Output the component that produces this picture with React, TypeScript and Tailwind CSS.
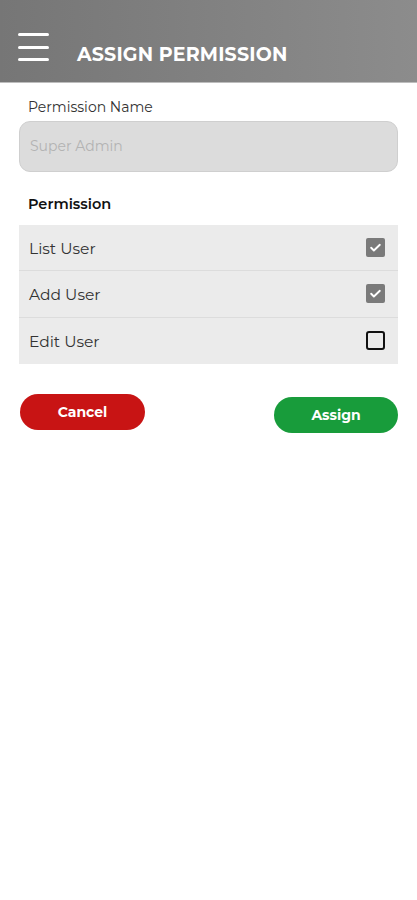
import React from "react";

const font = { fontFamily: "Montserrat, 'DejaVu Sans', 'Open Sans', sans-serif" };

function Check({ checked }: { checked: boolean }) {
  if (checked) {
    return (
      <div className="w-[19px] h-[19px] rounded-[2px] bg-[#7a7a7a] flex items-center justify-center">
        <svg width="13" height="13" viewBox="0 0 24 24" fill="none" stroke="#ffffff" strokeWidth="3.5" strokeLinecap="round" strokeLinejoin="round">
          <path d="M4 12.5l5 5L20 7" />
        </svg>
      </div>
    );
  }
  return <div className="w-[19px] h-[19px] rounded-[3px] border-2 border-[#111]" />;
}

export default function App() {
  const rows = [
    { label: "List User", checked: true },
    { label: "Add User", checked: true },
    { label: "Edit User", checked: false },
  ];
  return (
    <div className="w-[417px] h-[900px] bg-white" style={font}>
      <div className="h-[83px] bg-gradient-to-r from-[#767676] to-[#8c8c8c] border-b border-[#bdbdbd] flex items-end pb-[16px] pl-[18px]">
        <div className="flex flex-col gap-[9.5px] w-[31px] mb-[5px]">
          <div className="h-[3px] bg-white rounded-sm" />
          <div className="h-[3px] bg-white rounded-sm" />
          <div className="h-[3px] bg-white rounded-sm" />
        </div>
        <div className="ml-[28px] text-white font-bold text-[19px] leading-none tracking-[0.2px] mb-[2px]">ASSIGN PERMISSION</div>
      </div>

      <div className="px-[19px]">
        <div className="pl-[9px] pt-[17px] text-[14px] text-[#333] leading-none">Permission Name</div>
        <div className="mt-[7px] h-[51px] rounded-[11px] bg-[#dcdcdc] border border-[#cfcfcf] flex items-center pl-[10px] text-[14px] text-[#b3b3b3]">
          Super Admin
        </div>
        <div className="pl-[9px] mt-[25px] text-[14.5px] font-semibold text-[#111] leading-none">Permission</div>
        <div className="mt-[13px] bg-[#ebebeb]">
          {rows.map((r, i) => (
            <div
              key={r.label}
              className={`h-[46.5px] flex items-center justify-between pl-[10px] pr-[13px] ${i < rows.length - 1 ? "border-b border-[#dcdcdc]" : ""}`}
            >
              <span className="text-[15.5px] text-[#333] pt-[2px]">{r.label}</span>
              <Check checked={r.checked} />
            </div>
          ))}
        </div>
        <div className="mt-[30px] flex justify-between items-start">
          <button className="ml-[1px] w-[125px] h-[36px] rounded-full bg-[#c81414] text-white font-bold text-[14px]">Cancel</button>
          <button className="mt-[3px] w-[124px] h-[36px] rounded-full bg-[#189c3b] text-white font-bold text-[14px]">Assign</button>
        </div>
      </div>
    </div>
  );
}
